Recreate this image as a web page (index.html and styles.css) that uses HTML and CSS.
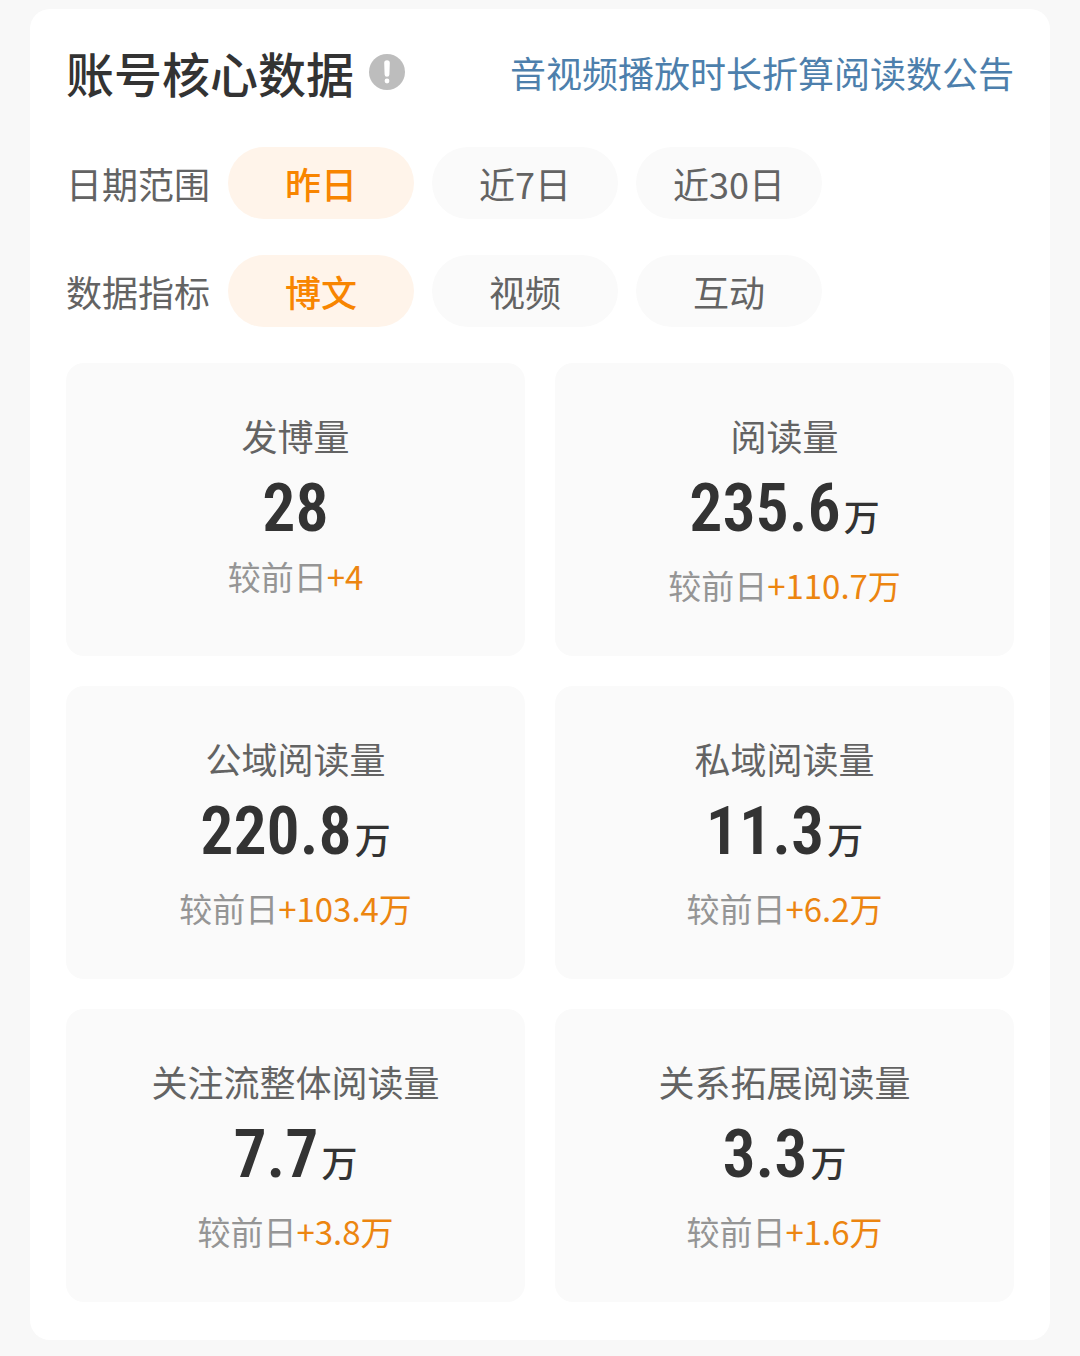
FILE: index.html
```html
<!DOCTYPE html>
<html lang="zh-CN">
  <head>
    <meta charset="UTF-8" />
    <meta name="viewport" content="width=device-width, initial-scale=1.0" />
    <title>账号核心数据</title>
    <link rel="stylesheet" href="styles.css">
  </head>
  <body>
    <main class="card">
      <header class="card-header">
        <h1>账号核心数据</h1>
        <button class="info" type="button" aria-label="说明">
          <svg viewBox="0 0 36 36" width="36" height="36">
            <circle cx="18" cy="18" r="18" fill="#bdbdbd" />
            <path d="M15.2 9a2.8 2.8 0 0 1 5.6 0l-.4 11.4a2.4 2.4 0 0 1-4.8 0z" fill="#fff" />
            <circle cx="18" cy="27" r="2.4" fill="#fff" />
          </svg>
        </button>
        <a class="notice" href="#">音视频播放时长折算阅读数公告</a>
      </header>

      <div class="filter" role="group" aria-labelledby="range-label">
        <span class="filter-label" id="range-label">日期范围</span>
        <button class="pill active" type="button">昨日</button>
        <button class="pill" type="button">近7日</button>
        <button class="pill" type="button">近30日</button>
      </div>
      <div class="filter" role="group" aria-labelledby="metric-label">
        <span class="filter-label" id="metric-label">数据指标</span>
        <button class="pill active" type="button">博文</button>
        <button class="pill" type="button">视频</button>
        <button class="pill" type="button">互动</button>
      </div>

      <section class="stats">
        <div class="stat">
          <h2>发博量</h2>
          <p class="value">28</p>
          <p class="compare">较前日<span class="up">+4</span></p>
        </div>
        <div class="stat">
          <h2>阅读量</h2>
          <p class="value with-unit">235.6<span class="unit">万</span></p>
          <p class="compare">较前日<span class="up">+110.7万</span></p>
        </div>
        <div class="stat">
          <h2>公域阅读量</h2>
          <p class="value with-unit">220.8<span class="unit">万</span></p>
          <p class="compare">较前日<span class="up">+103.4万</span></p>
        </div>
        <div class="stat">
          <h2>私域阅读量</h2>
          <p class="value with-unit">11.3<span class="unit">万</span></p>
          <p class="compare">较前日<span class="up">+6.2万</span></p>
        </div>
        <div class="stat">
          <h2>关注流整体阅读量</h2>
          <p class="value with-unit">7.7<span class="unit">万</span></p>
          <p class="compare">较前日<span class="up">+3.8万</span></p>
        </div>
        <div class="stat">
          <h2>关系拓展阅读量</h2>
          <p class="value with-unit">3.3<span class="unit">万</span></p>
          <p class="compare">较前日<span class="up">+1.6万</span></p>
        </div>
      </section>
    </main>
  </body>
</html>
```
FILE: styles.css
```css
* {
  box-sizing: border-box;
}

body {
  margin: 0;
  padding: 9px 30px 16px;
  background-color: #f8f8f8;
  color: #636363;
  font-family: "Noto Sans CJK SC", sans-serif;
  font-size: 36px;
  line-height: 54px;
}

h1,
h2,
p {
  margin: 0;
}

button {
  padding: 0;
  border: none;
  font: inherit;
  color: inherit;
  cursor: pointer;
}

.card {
  padding: 30px 36px 38px;
  background-color: #fff;
  border-radius: 20px;
}

.card-header {
  display: flex;
  align-items: center;
  height: 66px;
  margin-bottom: 42px;
}

h1 {
  color: #333;
  font-size: 48px;
  font-weight: 500;
  line-height: 66px;
}

.info {
  display: flex;
  margin-left: 15px;
  background: none;
}

.notice {
  margin-left: auto;
  color: #4d7fac;
  text-decoration: none;
}

.filter {
  display: flex;
  align-items: center;
  gap: 18px;
  margin-bottom: 36px;
}

.pill {
  width: 186px;
  height: 72px;
  background-color: #fafafa;
  border-radius: 36px;
}

.pill.active {
  background-color: #fff4ea;
  color: #f88500;
  font-weight: 500;
}

.stats {
  display: grid;
  grid-template-columns: 1fr 1fr;
  grid-auto-rows: 1fr;
  gap: 30px;
}

.stat {
  padding: 45px 0 44px;
  background-color: #fafafa;
  border-radius: 18px;
  text-align: center;
}

h2 {
  font-size: 36px;
  font-weight: 400;
}

.value {
  height: 87px;
  color: #333;
  font-family: "DIN Condensed", "Roboto Condensed", "Liberation Sans Narrow", "Noto Sans CJK SC", sans-serif;
  font-size: 66px;
  font-weight: 600;
  line-height: 93px;
}

.value.with-unit {
  height: 96px;
}

.unit {
  margin-left: 3px;
  font-family: "Noto Sans CJK SC", sans-serif;
  font-size: 36px;
  font-weight: 500;
}

.compare {
  color: #959595;
  font-size: 33px;
}

.up {
  color: #ec8510;
}
```
